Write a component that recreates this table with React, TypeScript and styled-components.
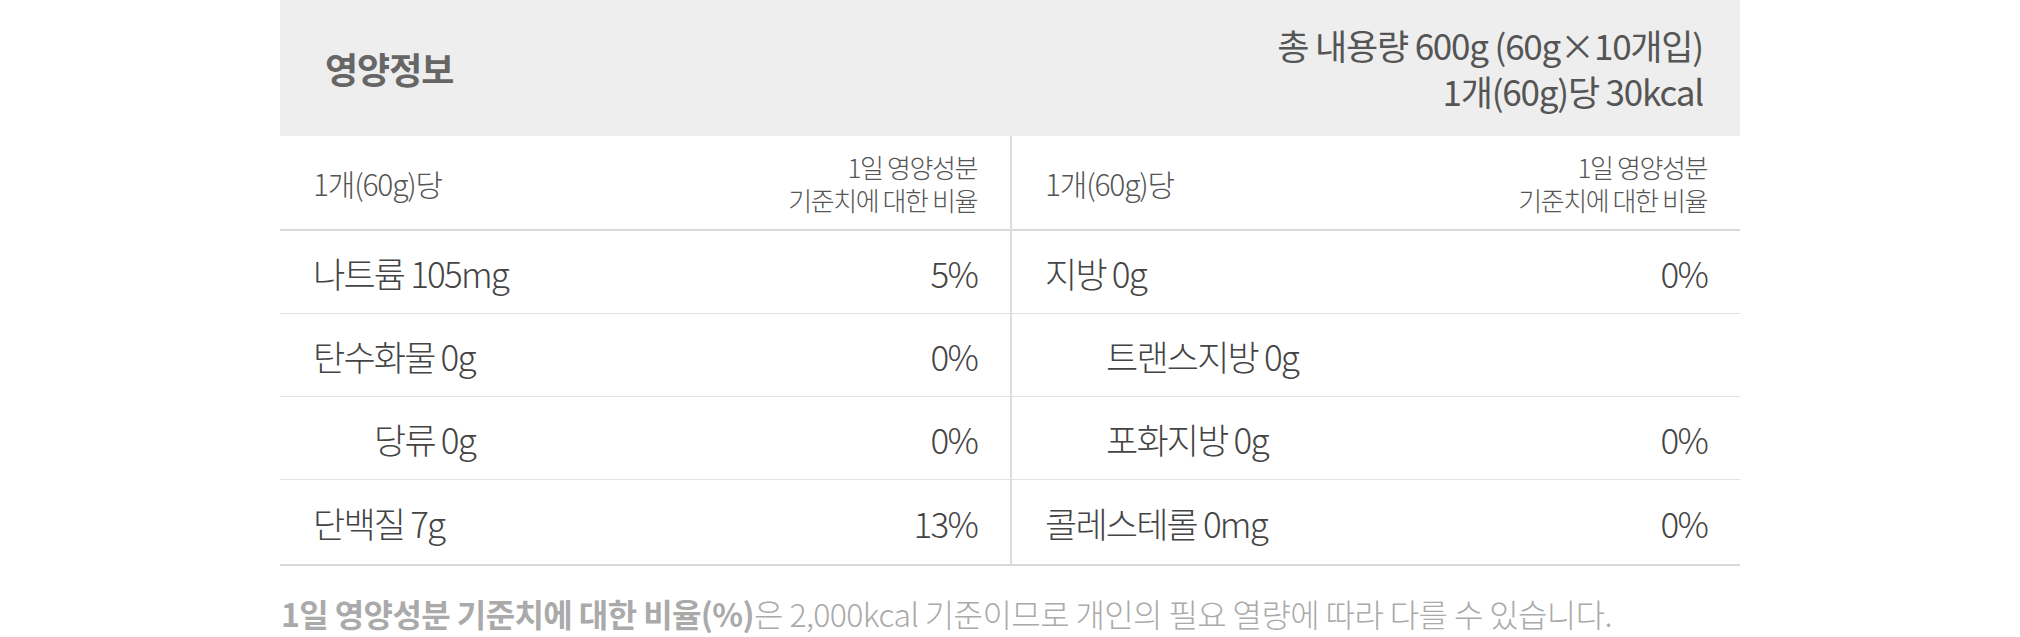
import React from 'react';
import styled, { createGlobalStyle } from 'styled-components';

const GlobalStyle = createGlobalStyle`
  body {
    margin: 0;
    background: #fff;
    font-family: 'Noto Sans CJK KR', 'Noto Sans', sans-serif;
  }
`;

const Wrap = styled.div`
  width: 1460px;
  margin: 0 auto;
`;

const Header = styled.div`
  height: 136px;
  background: #eeeeee;
  display: flex;
  align-items: center;
  justify-content: space-between;
  padding: 0 37px 0 45px;
  box-sizing: border-box;
`;

const Title = styled.h2`
  margin: 0;
  font-size: 36px;
  font-weight: 700;
  color: #666;
  letter-spacing: -1px;
`;

const Summary = styled.div`
  text-align: right;
  font-size: 35px;
  line-height: 46px;
  color: #555;
  letter-spacing: -1.2px;
`;

const Columns = styled.div`
  display: grid;
  grid-template-columns: 1fr 1fr;
  border-bottom: 2px solid #d9d9d9;
`;

const Column = styled.div<{ divided?: boolean }>`
  border-left: ${({ divided }) => (divided ? '2px solid #dddddd' : 'none')};
`;

const SubHead = styled.div`
  height: 93px;
  display: flex;
  align-items: center;
  justify-content: space-between;
  padding: 0 33px;
  border-bottom: 2px solid #d9d9d9;
  color: #555;
  font-weight: 300;
`;

const PerUnit = styled.span`
  font-size: 30px;
  letter-spacing: -1.2px;
`;

const RatioLabel = styled.span`
  display: flex;
  flex-direction: column;
  align-items: flex-end;
  font-size: 26px;
  line-height: 33px;
  letter-spacing: -1.4px;
`;

const Row = styled.div<{ last?: boolean }>`
  height: ${({ last }) => (last ? '84px' : '83px')};
  display: flex;
  align-items: center;
  justify-content: space-between;
  padding: 0 33px;
  box-sizing: border-box;
  border-bottom: ${({ last }) => (last ? 'none' : '1px solid #e2e2e2')};
  font-size: 35px;
  font-weight: 300;
  color: #444;
  letter-spacing: -1.8px;
`;

const Name = styled.span<{ sub?: boolean }>`
  padding-left: ${({ sub }) => (sub ? '61px' : '0')};
`;

const Note = styled.p`
  margin: 0;
  padding: 24px 0 0 1px;
  font-size: 32px;
  color: #aaa;
  font-weight: 300;
  letter-spacing: -0.6px;

  b {
    font-weight: 700;
    color: #aaa;
  }
`;

type Item = { name: string; value: string; sub?: boolean };

const left: Item[] = [
  { name: '나트륨 105mg', value: '5%' },
  { name: '탄수화물 0g', value: '0%' },
  { name: '당류 0g', value: '0%', sub: true },
  { name: '단백질 7g', value: '13%' },
];

const right: Item[] = [
  { name: '지방 0g', value: '0%' },
  { name: '트랜스지방 0g', value: '', sub: true },
  { name: '포화지방 0g', value: '0%', sub: true },
  { name: '콜레스테롤 0mg', value: '0%' },
];

const NutritionColumn = ({ items, divided }: { items: Item[]; divided?: boolean }) => (
  <Column divided={divided}>
    <SubHead>
      <PerUnit>1개(60g)당</PerUnit>
      <RatioLabel>
        <span>1일 영양성분</span>
        <span>기준치에 대한 비율</span>
      </RatioLabel>
    </SubHead>
    {items.map((item, i) => (
      <Row key={item.name} last={i === items.length - 1}>
        <Name sub={item.sub}>{item.name}</Name>
        <span>{item.value}</span>
      </Row>
    ))}
  </Column>
);

export default function App() {
  return (
    <>
      <GlobalStyle />
      <Wrap>
        <Header>
          <Title>영양정보</Title>
          <Summary>
            총 내용량 600g (60g×10개입)
            <br />
            1개(60g)당 30kcal
          </Summary>
        </Header>
        <Columns>
          <NutritionColumn items={left} />
          <NutritionColumn items={right} divided />
        </Columns>
        <Note>
          <b>1일 영양성분 기준치에 대한 비율(%)</b>은 2,000kcal 기준이므로 개인의 필요 열량에 따라 다를 수 있습니다.
        </Note>
      </Wrap>
    </>
  );
}
